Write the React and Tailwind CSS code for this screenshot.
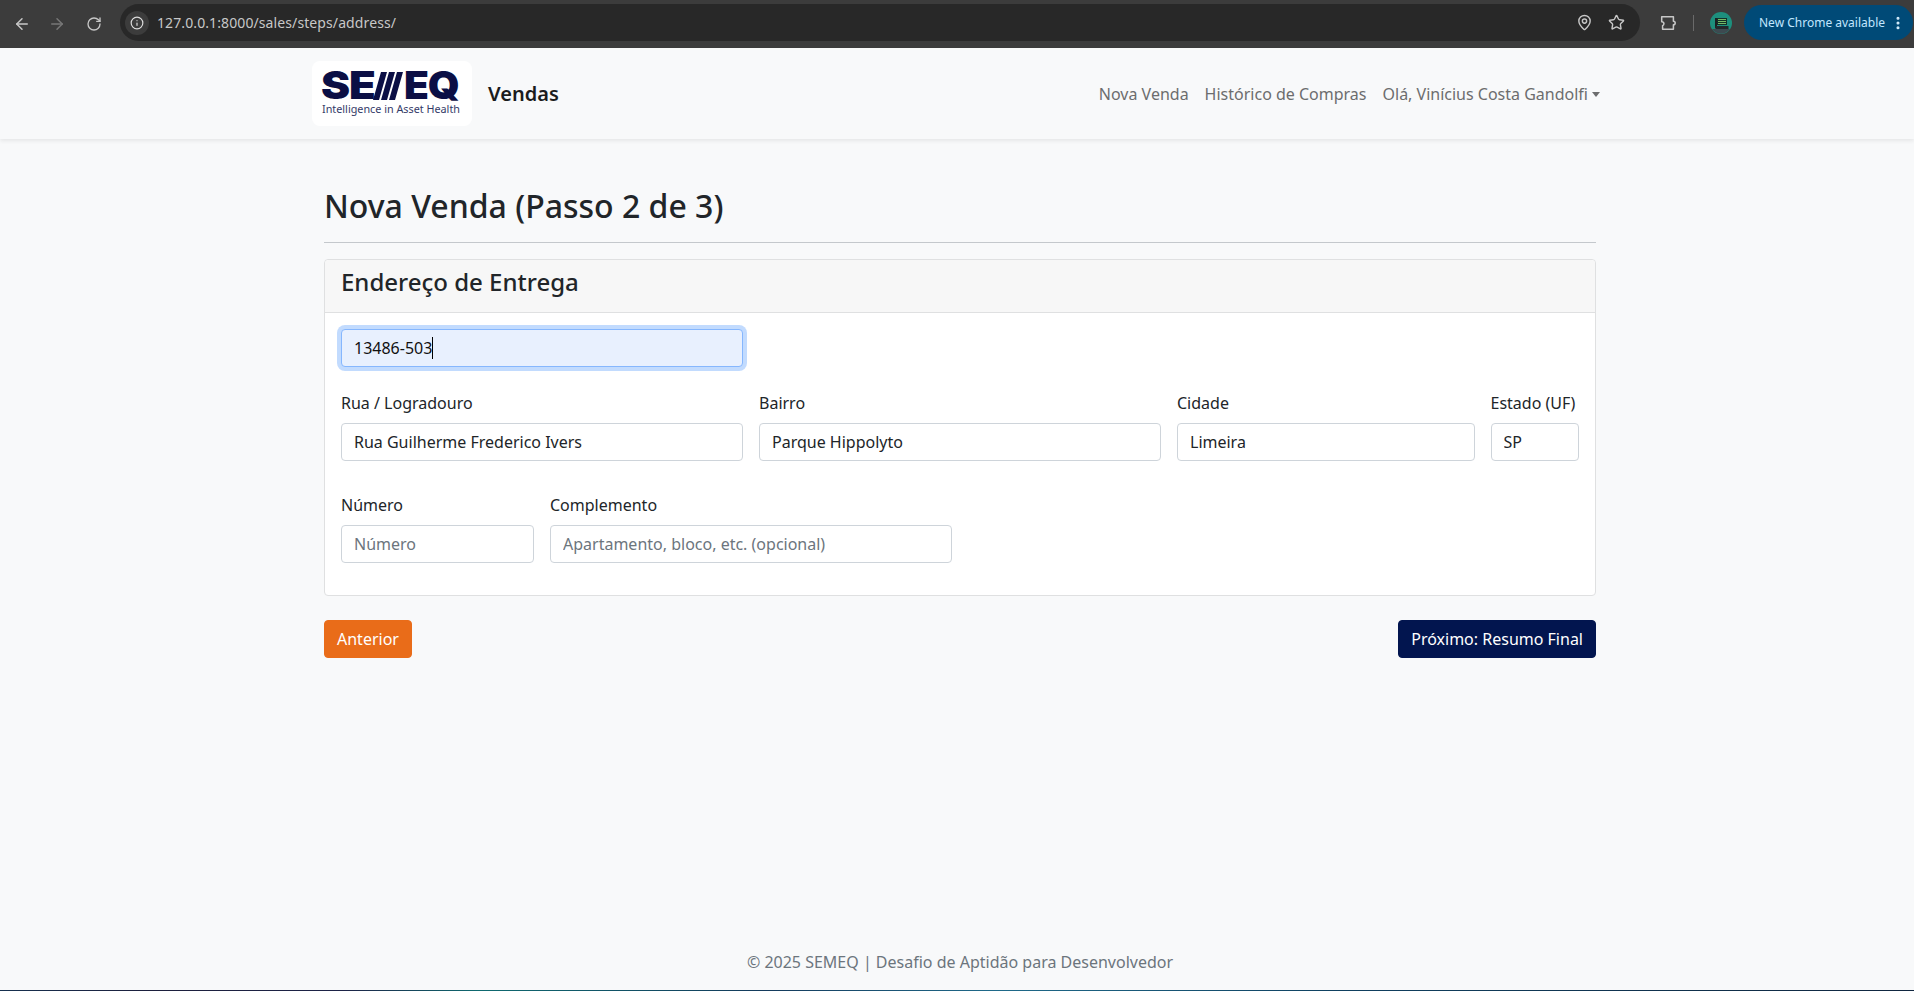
import { ArrowLeft, ArrowRight, RotateCw, Info, MapPin, Star, EllipsisVertical } from 'lucide-react'

function Toolbar() {
  return (
    <div className="h-12 shrink-0 bg-[#3c3c3c] flex items-center text-[#c7c7c7]">
      <ArrowLeft className="w-[18px] h-[18px] ml-[13px] text-[#c7c7c7]" />
      <ArrowRight className="w-[18px] h-[18px] ml-[17px] text-[#777777]" />
      <RotateCw className="w-4 h-4 ml-[20px] text-[#c7c7c7]" />
      <div className="ml-[18px] w-[1520px] h-[37px] mb-[3px] rounded-full bg-[#282828] flex items-center">
        <div className="ml-[5px] w-6 h-6 rounded-full bg-[#3c3c3c] flex items-center justify-center">
          <Info className="w-[14px] h-[14px] text-[#dddddd]" />
        </div>
        <span className="ml-2 text-[14px] tracking-[0.1px] text-[#c7c7c7] font-['Noto_Sans',sans-serif]">127.0.0.1:8000/sales/steps/address/</span>
        <MapPin className="w-[17px] h-[17px] ml-auto text-[#c7c7c7]" />
        <Star className="w-[17px] h-[17px] ml-[15px] mr-[15px] text-[#c7c7c7]" />
      </div>
      <svg viewBox="0 0 20 20" fill="none" stroke="#c7c7c7" strokeWidth="1.7" strokeLinejoin="round" className="w-[18px] h-[18px] ml-[19px] mb-[3px]">
        <path d="M3 3h13v5a2 2 0 0 1 0 4v5H4v-4a2.5 2.5 0 0 0 1.5-2.2A2.5 2.5 0 0 0 3 8.5z" />
      </svg>
      <div className="w-px h-4 bg-[#6a6a6a] ml-4 mb-[3px]"></div>
      <svg viewBox="0 0 22 22" className="w-[22px] h-[22px] ml-4 mb-[3px]">
        <circle cx="11" cy="11" r="11" fill="#1d8f7d" />
        <path d="M2 17h18a11 11 0 0 1-18 0z" fill="#3d4a50" />
        <rect x="7" y="6" width="10" height="7" fill="#14302a" />
        <path d="M8 7.5h8M8 9.5h8M8 11.5h8" stroke="#7fc96c" strokeWidth="0.9" />
        <rect x="5" y="6" width="2" height="10" fill="#1c1f22" />
        <rect x="5.5" y="14" width="13" height="3" fill="#23282b" />
      </svg>
      <div className="ml-3 w-[169px] h-[35px] mb-[3px] rounded-full bg-[#004a77] flex items-center pl-[15px] text-[12px] text-[#c2e7ff] font-['Noto_Sans',sans-serif]">
        <span>New Chrome available</span>
        <EllipsisVertical className="w-4 h-4 ml-[5px] text-[#d6eefc]" strokeWidth={2.6} />
      </div>
    </div>
  )
}

function Logo() {
  return (
    <div className="w-40 h-[65px] bg-white rounded-lg flex flex-col items-start pl-[10px] pt-[10px]">
      <div className="flex items-center h-[29px] text-[#0b0f45] font-['Inter',sans-serif] font-black text-[38px] leading-[29px]">
        <span className="inline-block w-[51px] -ml-[1px] scale-x-[1.15] origin-left tracking-[-1px]">SE</span>
        <svg viewBox="0 0 30 28" className="w-[30px] h-7 ml-[1px]">
          <path d="M8 0h6L6 28H0zM16 0h6l-8 28H8zM24 0h6l-8 28h-6z" fill="#0b0f45" />
        </svg>
        <span className="inline-block w-[56px] ml-[1px] scale-x-[1.07] origin-left tracking-[-1px]">EQ</span>
      </div>
      <span className="text-[10.8px] leading-none mt-[4px] text-[#343a68] font-['Noto_Sans',sans-serif] whitespace-nowrap">Intelligence in Asset Health</span>
    </div>
  )
}

function Navbar() {
  return (
    <nav className="h-[91px] shrink-0 bg-[#f8f9fa] shadow-[0_2px_4px_rgba(0,0,0,0.075)] pl-[312px] pr-[314px] flex items-center relative">
      <Logo />
      <span className="ml-4 text-[20px] font-semibold text-[#1b1c1d]">Vendas</span>
      <div className="ml-auto flex gap-4 text-[#6c6d6e]">
        <a>Nova Venda</a>
        <a>Histórico de Compras</a>
        <a className="flex items-center">
          Olá, Vinícius Costa Gandolfi
          <span className="ml-1 mt-[1px] w-0 h-0 border-x-[4px] border-x-transparent border-t-[5px] border-t-[#6c6d6e]"></span>
        </a>
      </div>
    </nav>
  )
}

function Field({ label, placeholder, value, span }) {
  return (
    <div className={span}>
      <label className="block mb-2 leading-6 text-[#212529]">{label}</label>
      <input
        readOnly
        value={value || ''}
        placeholder={placeholder}
        className="w-full h-[38px] px-3 bg-white border border-[#ced4da] rounded-sm text-[#212529] placeholder:text-[#6c757d] outline-none"
      />
    </div>
  )
}

export default function App() {
  return (
    <div className="min-h-[991px] w-full overflow-hidden flex flex-col bg-[#f8f9fa] text-[#212529] font-['Noto_Sans',sans-serif] text-base">
      <Toolbar />
      <Navbar />

      <main className="ml-[324px] w-[1272px] mt-12">
        <h2 className="text-[32px] leading-[38px] font-medium pb-[17px] border-b border-[#c4c8cc] mb-4">Nova Venda (Passo 2 de 3)</h2>

        <div className="bg-white border border-[#dfe0e1] rounded-sm">
          <div className="bg-[#f7f7f7] border-b border-[#dfe0e1] px-4 pt-[7px] pb-4 rounded-t-sm">
            <h4 className="text-[24px] leading-[29px] font-medium">Endereço de Entrega</h4>
          </div>
          <div className="p-4 pb-8">
            <div className="grid grid-cols-12 gap-x-4">
              <div className="col-span-4 relative">
                <input
                  readOnly
                  value="13486-503"
                  className="w-full h-[38px] px-3 bg-[#e8f0fe] border border-[#86b7fe] rounded-sm text-[#111111] outline-none shadow-[0_0_0_4px_rgba(13,110,253,0.25)]"
                />
                <span className="absolute left-[91px] top-2 w-px h-[22px] bg-black"></span>
              </div>
            </div>
            <div className="grid grid-cols-12 gap-x-4 mt-6">
              <Field span="col-span-4" label="Rua / Logradouro" value="Rua Guilherme Frederico Ivers" />
              <Field span="col-span-4" label="Bairro" value="Parque Hippolyto" />
              <Field span="col-span-3" label="Cidade" value="Limeira" />
              <Field span="col-span-1" label="Estado (UF)" value="SP" />
            </div>
            <div className="grid grid-cols-12 gap-x-4 mt-8">
              <Field span="col-span-2" label="Número" placeholder="Número" />
              <Field span="col-span-4" label="Complemento" placeholder="Apartamento, bloco, etc. (opcional)" />
            </div>
          </div>
        </div>

        <div className="flex justify-between mt-6">
          <button className="h-[38px] px-3 rounded-sm border border-[#e96c19] bg-[#e96c19] text-white">Anterior</button>
          <button className="h-[38px] px-3 rounded-sm border border-[#02154f] bg-[#02154f] text-white">Próximo: Resumo Final</button>
        </div>
      </main>

      <footer className="mt-auto pl-[6px] pb-4 text-center leading-6 text-[#6c757d]">© 2025 SEMEQ | Desafio de Aptidão para Desenvolvedor</footer>
      <div className="h-px shrink-0 bg-[linear-gradient(90deg,#16304f_0%,#1c1f3d_8%,#1d2347_18%,#0e6a70_25%,#143a5c_40%,#1f6a8a_52%,#0f4060_70%,#10263f_100%)]"></div>
    </div>
  )
}
